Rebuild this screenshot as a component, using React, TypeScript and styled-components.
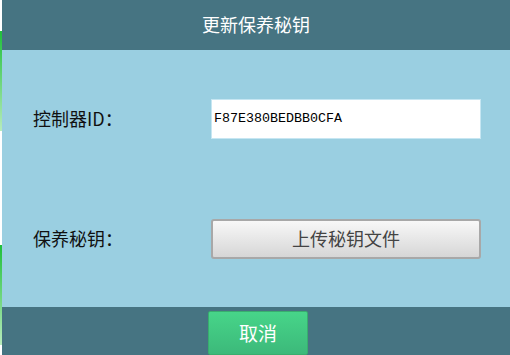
import styled, { createGlobalStyle } from 'styled-components';

const GlobalStyle = createGlobalStyle`
    html, body {
        margin: 0;
        padding: 0;
        width: 510px;
        height: 355px;
        overflow: hidden;
        background: #ffffff;
    }
    * {
        box-sizing: border-box;
    }
`

const PageStyle = styled.div`
    width: 510px;
    height: 355px;
    display: flex;
    font-family: "Noto Sans CJK SC", "Noto Sans", sans-serif;
`

const BackdropStyle = styled.div`
    width: 2px;
    height: 355px;
    display: flex;
    flex-direction: column;
    background: #ffffff;
`

const BackdropBar = styled.div<{ $top: number; $height: number }>`
    margin-top: ${(p) => p.$top}px;
    height: ${(p) => p.$height}px;
    background: linear-gradient(#1fbf3a, #b8ecbc);
`

const DialogStyle = styled.div`
    flex: 1;
    height: 355px;
    display: flex;
    flex-direction: column;
`

const HeaderStyle = styled.div`
    height: 50px;
    background: #467482;
    color: #ffffff;
    font-size: 18px;
    display: flex;
    align-items: center;
    justify-content: center;
    padding-bottom: 2px;
`

const BodyStyle = styled.div`
    height: 258px;
    background: #9acfe1;
    padding: 49px 29px 0px 31px;
    display: flex;
    flex-direction: column;
    gap: 80px;
`

const RowStyle = styled.div`
    display: flex;
    align-items: center;
    height: 40px;
`

const LabelStyle = styled.div`
    width: 178px;
    font-size: 18px;
    color: #111111;
    padding-bottom: 2px;
`

const InputStyle = styled.div`
    width: 270px;
    height: 40px;
    background: #ffffff;
    border: 1px solid #c6e6f2;
    display: flex;
    align-items: center;
    padding-left: 2px;
    font-family: "Liberation Mono", monospace;
    font-size: 13.33px;
    color: #000000;
`

const UploadButton = styled.div`
    width: 270px;
    height: 40px;
    border: 2px solid #a8a8a8;
    border-radius: 3px;
    background: linear-gradient(#f8f8f8, #d6d6d6);
    color: #444444;
    font-size: 18px;
    display: flex;
    align-items: center;
    justify-content: center;
    padding-bottom: 2px;
`

const FooterStyle = styled.div`
    flex: 1;
    background: #467482;
    display: flex;
    justify-content: center;
    padding-top: 4px;
`

const CancelButton = styled.div`
    width: 100px;
    height: 44px;
    margin-left: 4px;
    border: 1px solid #38ae6e;
    border-radius: 2px;
    background: linear-gradient(#47d589, #3cb97a);
    color: #ffffff;
    font-size: 19px;
    display: flex;
    align-items: center;
    justify-content: center;
    padding-bottom: 2px;
`

const App = () => {
    return (
        <PageStyle>
            <GlobalStyle />
            <BackdropStyle>
                <BackdropBar $top={31} $height={100} />
                <BackdropBar $top={114} $height={100} />
            </BackdropStyle>
            <DialogStyle>
                <HeaderStyle>更新保养秘钥</HeaderStyle>
                <BodyStyle>
                    <RowStyle>
                        <LabelStyle>控制器ID：</LabelStyle>
                        <InputStyle>F87E380BEDBB0CFA</InputStyle>
                    </RowStyle>
                    <RowStyle>
                        <LabelStyle>保养秘钥：</LabelStyle>
                        <UploadButton>上传秘钥文件</UploadButton>
                    </RowStyle>
                </BodyStyle>
                <FooterStyle>
                    <CancelButton>取消</CancelButton>
                </FooterStyle>
            </DialogStyle>
        </PageStyle>
    )
}

export default App;
